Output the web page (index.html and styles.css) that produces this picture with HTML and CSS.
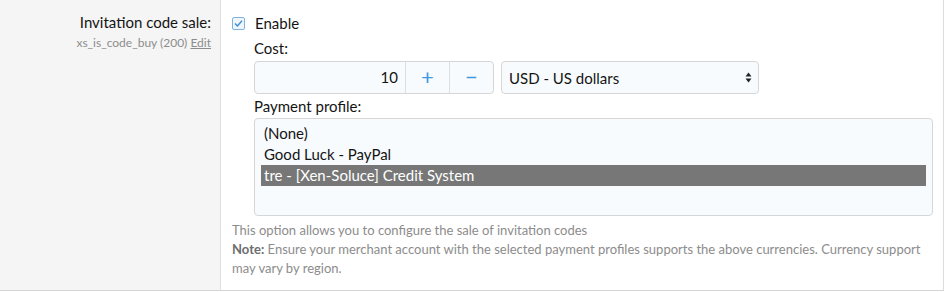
FILE: index.html
```html
<!DOCTYPE html>
<html>
<head>
<meta charset="utf-8">
<link rel="stylesheet" href="styles.css">
</head>
<body>
<div class="row">
  <div class="label-col">
    <div class="label">Invitation code sale:</div>
    <div class="explain">xs_is_code_buy (200) <a class="edit">Edit</a></div>
  </div>
  <div class="field-col">
    <label class="check">
      <span class="box"><svg width="11" height="11" viewBox="0 0 11 11"><path d="M2 5.6 L4.4 8 L9 2.8" fill="none" stroke="#3f8fd0" stroke-width="1.4"/></svg></span>
      <span>Enable</span>
    </label>
    <div class="sub">
      <div class="sublabel">Cost:</div>
      <div class="cost-row">
        <div class="spinner">
          <div class="num">10</div>
          <div class="btn">+</div>
          <div class="btn minus">&minus;</div>
        </div>
        <div class="select">
          <span>USD - US dollars</span>
          <svg width="7" height="11" viewBox="0 0 7 11"><path d="M3.5 0.5 L6.5 4.5 H0.5 Z M3.5 10.5 L6.5 6.5 H0.5 Z" fill="#222"/></svg>
        </div>
      </div>
      <div class="sublabel pp">Payment profile:</div>
      <div class="listbox">
        <div class="opt">(None)</div>
        <div class="opt">Good Luck - PayPal</div>
        <div class="opt sel">tre - [Xen-Soluce] Credit System</div>
      </div>
    </div>
    <div class="hint">
      <div>This option allows you to configure the sale of invitation codes</div>
      <div><b>Note:</b> Ensure your merchant account with the selected payment profiles supports the above currencies. Currency support may vary by region.</div>
    </div>
  </div>
</div>
</body>
</html>
```

FILE: styles.css
```css
html, body {
  margin: 0;
  padding: 0;
  background: #fff;
}
body {
  font-family: Lato, "Open Sans", sans-serif;
  color: #141414;
  width: 945px;
  height: 292px;
  overflow: hidden;
}
.row {
  display: flex;
  height: 291px;
  border-bottom: 1px solid #d4d4d4;
  border-right: 1px solid #dcdcdc;
  box-sizing: border-box;
  width: 944px;
}
.label-col {
  width: 221px;
  box-sizing: border-box;
  background: #f5f5f5;
  border-right: 1px solid #e0e0e0;
  text-align: right;
  padding: 12px 9px 0 0;
}
.label {
  font-size: 15px;
  line-height: 20px;
}
.explain {
  font-size: 12px;
  color: #8c8c8c;
  line-height: 16px;
  margin-top: 3px;
}
.edit {
  text-decoration: underline;
  color: #8c8c8c;
}
.field-col {
  flex: 1;
  padding: 13px 4px 0 11px;
}
.check {
  display: flex;
  align-items: center;
  font-size: 15px;
  line-height: 20px;
}
.box {
  width: 11px;
  height: 11px;
  border: 1px solid #7fb2de;
  border-radius: 2px;
  background: #eef5fc;
  margin-right: 10px;
  display: flex;
}
.sub {
  padding-left: 22px;
  margin-top: 5px;
}
.sublabel {
  font-size: 15px;
  line-height: 20px;
}
.cost-row {
  display: flex;
  gap: 7px;
  margin-top: 3px;
}
.spinner {
  display: flex;
  height: 33px;
  box-sizing: border-box;
  border: 1px solid #d6d6d6;
  border-radius: 4px;
  background: #f8fbfd;
}
.num {
  width: 150px;
  box-sizing: border-box;
  text-align: right;
  padding-right: 7px;
  font-size: 15px;
  line-height: 31px;
}
.btn {
  width: 43px;
  border-left: 1px solid #dedede;
  text-align: center;
  color: #3d9ae0;
  font-size: 22px;
  line-height: 30px;
}
.btn.minus {
  width: 43px;
}
.select {
  width: 258px;
  height: 33px;
  box-sizing: border-box;
  border: 1px solid #d6d6d6;
  border-radius: 4px;
  background: #f8fbfd;
  display: flex;
  align-items: center;
  justify-content: space-between;
  padding: 0 6px 0 7px;
  font-size: 15px;
}
.pp {
  margin-top: 2px;
}
.listbox {
  margin-top: 2px;
  width: 679px;
  height: 98px;
  box-sizing: border-box;
  border: 1px solid #d6d6d6;
  border-radius: 4px;
  background: #f8fbfd;
  padding: 4px 6px 0 6px;
}
.opt {
  font-size: 15px;
  line-height: 21px;
  padding-left: 3px;
}
.opt.sel {
  background: #777;
  color: #fff;
}
.hint {
  font-size: 13px;
  color: #8c8c8c;
  line-height: 19px;
  margin-top: 5px;
}
.hint b {
  color: #6e6e6e;
}
```
